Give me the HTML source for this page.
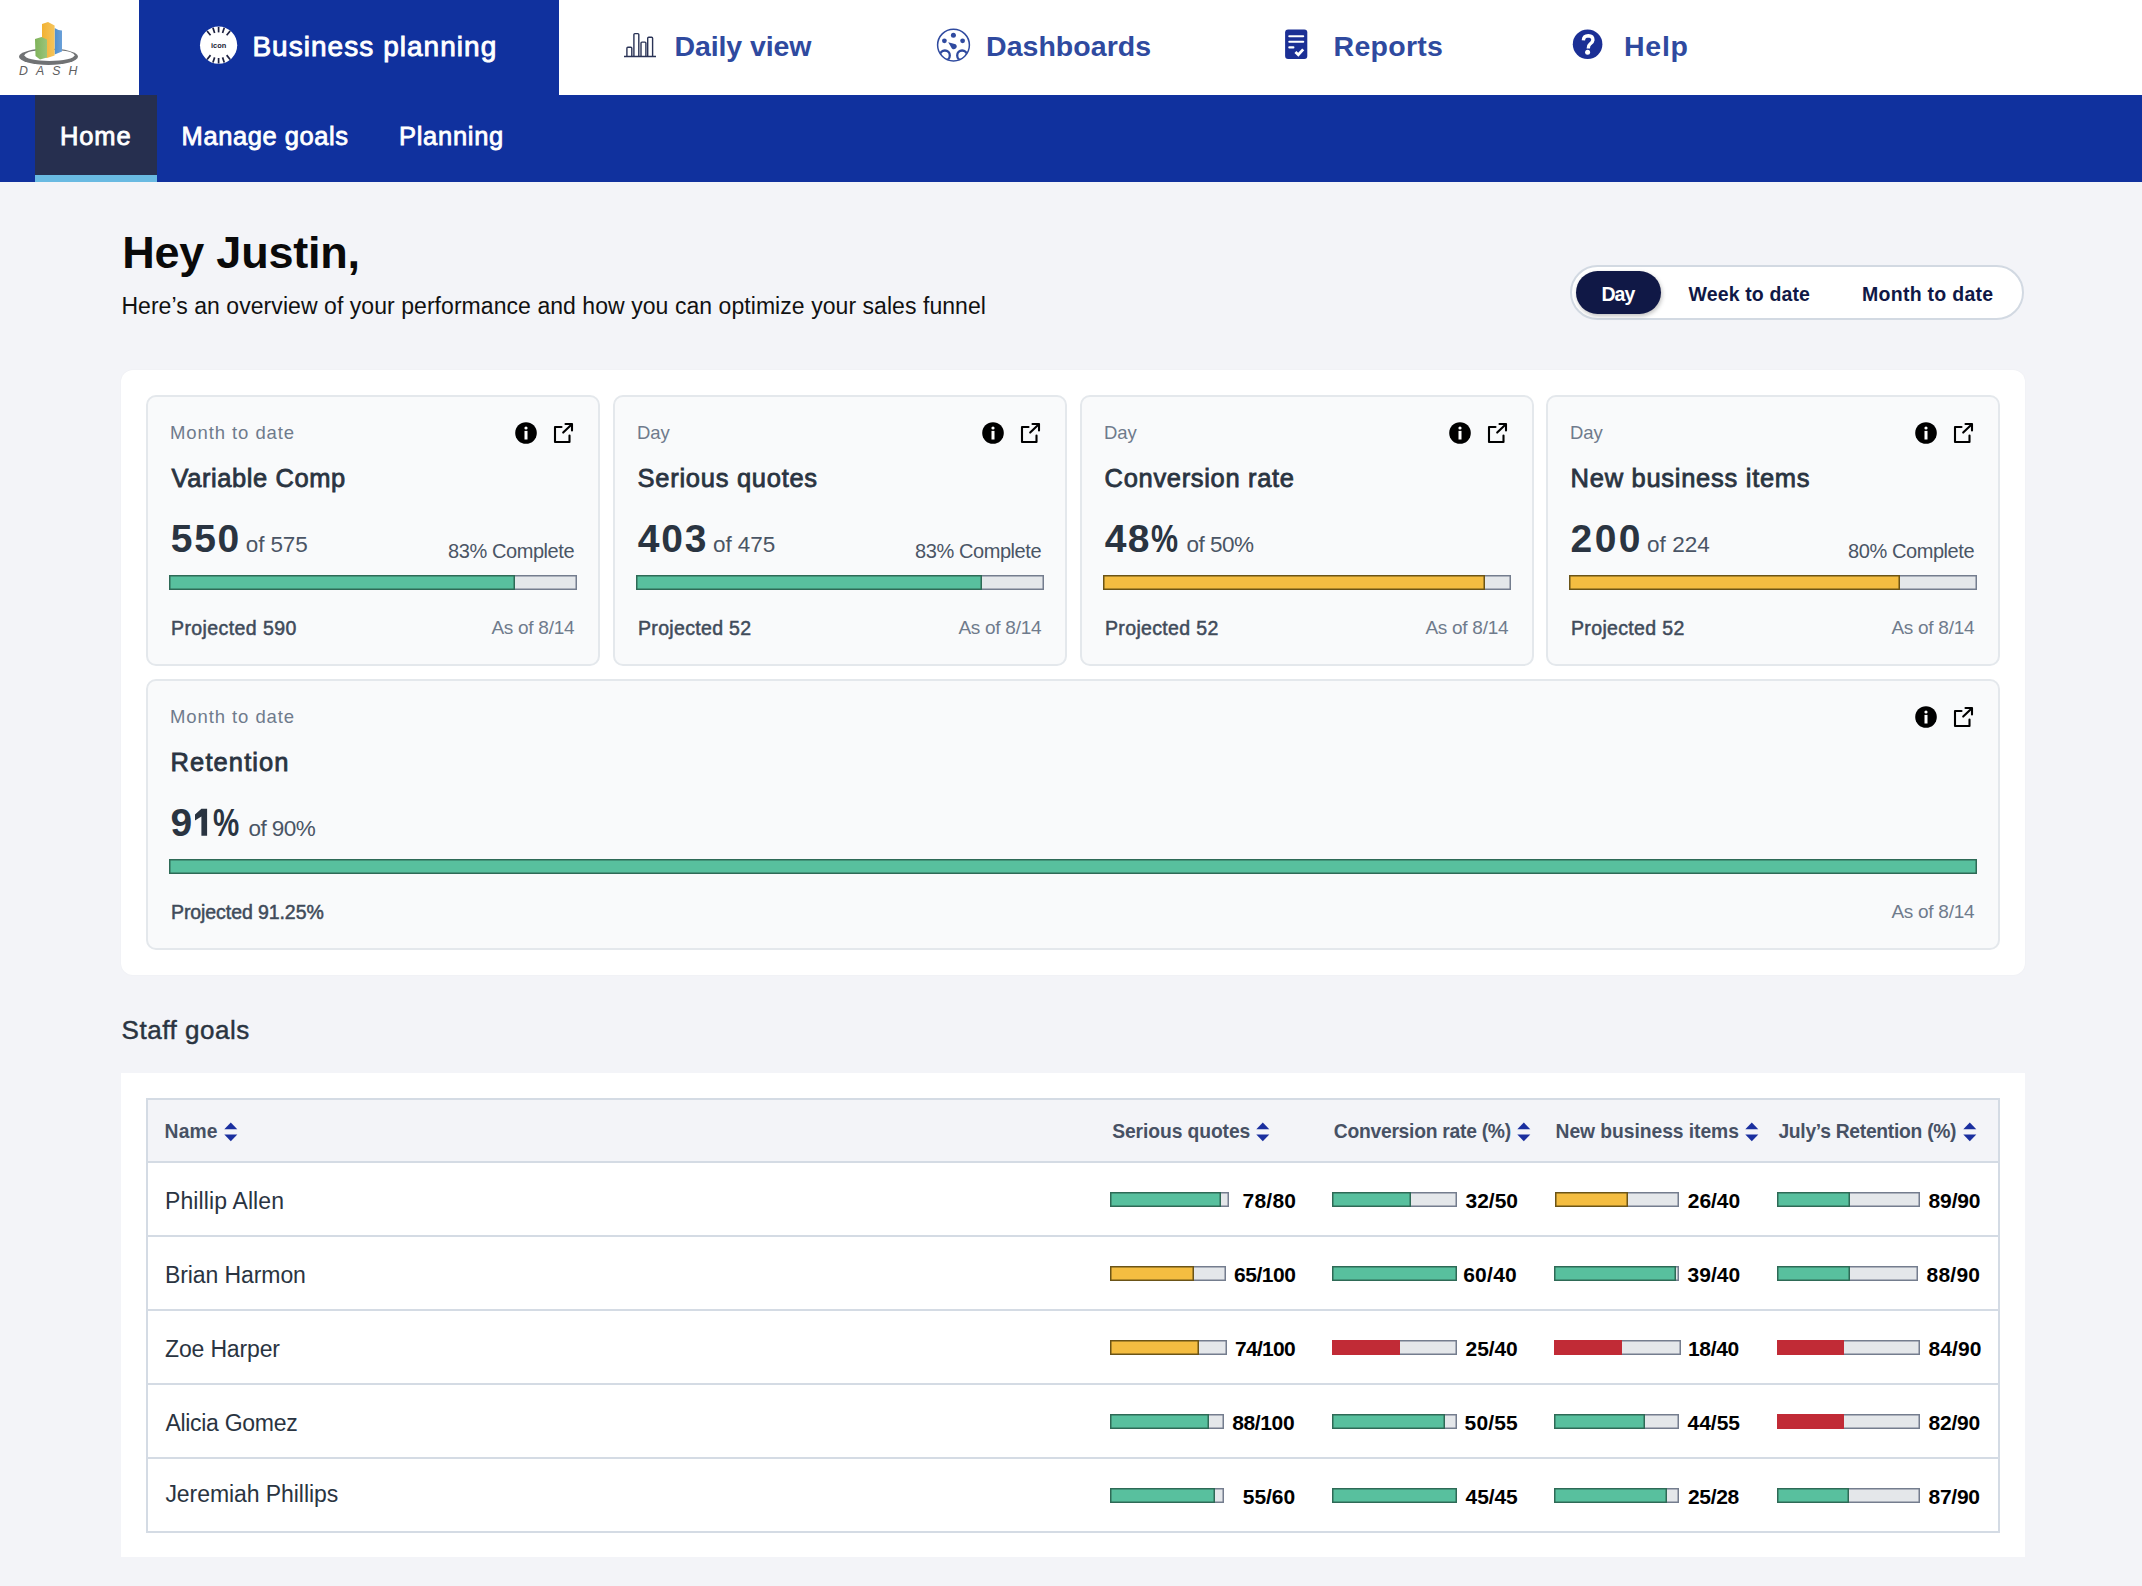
<!DOCTYPE html>
<html><head><meta charset="utf-8"><title>DASH - Business planning</title>
<style>
html,body{margin:0;padding:0;}
body{width:2142px;height:1586px;position:relative;overflow:hidden;background:#f3f4f8;font-family:"Liberation Sans",sans-serif;}
.t{position:absolute;white-space:nowrap;}
.b{position:absolute;}
svg.b{overflow:visible;}
</style></head><body>
<div class="b" style="left:0px;top:0px;width:2142px;height:95px;background:#fff;"></div>
<div class="b" style="left:139px;top:0px;width:420px;height:95px;background:#10319e;"></div>
<div class="b" style="left:0px;top:95px;width:2142px;height:87px;background:#10319e;"></div>
<div class="b" style="left:35px;top:95px;width:122px;height:87px;background:#262f4f;"></div>
<div class="b" style="left:35px;top:175px;width:122px;height:7px;background:#69bae2;"></div>
<svg class="b" style="left:0;top:0" width="139" height="95" viewBox="0 0 139 95">
<defs>
<linearGradient id="gg" x1="0" x2="1"><stop offset="0" stop-color="#7fb35a"/><stop offset="1" stop-color="#9ac47a"/></linearGradient>
<linearGradient id="og" x1="0" x2="1"><stop offset="0" stop-color="#f2b233"/><stop offset="1" stop-color="#f5c45c"/></linearGradient>
<linearGradient id="bg" x1="0" x2="1"><stop offset="0" stop-color="#4f8fd0"/><stop offset="1" stop-color="#6aa0d8"/></linearGradient>
</defs>
<ellipse cx="48.5" cy="56.7" rx="29.5" ry="8.2" fill="#707274"/>
<ellipse cx="49.5" cy="55.3" rx="25" ry="5.6" fill="#fff"/>
<polygon points="54.6,28 58.5,30 62,30.5 62,51.5 54.6,54.5" fill="url(#bg)"/>
<polygon points="42,24 48,22 54.6,25.5 54.6,55.5 47,58 42,56" fill="url(#og)"/>
<polygon points="35,39 41.5,37 47,39.5 47,57.5 40,59.5 35.5,56" fill="url(#gg)"/>
<text x="19" y="75" font-family="Liberation Sans" font-style="italic" font-size="12.3" fill="#606060" letter-spacing="8.1">DASH</text>
</svg>
<svg class="b" style="left:0;top:0" width="260" height="95" viewBox="0 0 260 95">
<circle cx="218.6" cy="45.2" r="18.6" fill="#fff"/><line x1="218.60" y1="32.40" x2="218.60" y2="26.90" stroke="#1d2140" stroke-width="1.7"/><line x1="222.56" y1="33.03" x2="224.26" y2="27.80" stroke="#1d2140" stroke-width="1.7"/><line x1="226.66" y1="35.25" x2="230.12" y2="30.98" stroke="#1d2140" stroke-width="1.7"/><line x1="214.64" y1="33.03" x2="212.94" y2="27.80" stroke="#1d2140" stroke-width="1.7"/><line x1="210.54" y1="35.25" x2="207.08" y2="30.98" stroke="#1d2140" stroke-width="1.7"/><line x1="218.60" y1="58.00" x2="218.60" y2="63.50" stroke="#1d2140" stroke-width="1.7"/><line x1="222.56" y1="57.37" x2="224.26" y2="62.60" stroke="#1d2140" stroke-width="1.7"/><line x1="226.66" y1="55.15" x2="230.12" y2="59.42" stroke="#1d2140" stroke-width="1.7"/><line x1="214.64" y1="57.37" x2="212.94" y2="62.60" stroke="#1d2140" stroke-width="1.7"/><line x1="210.54" y1="55.15" x2="207.08" y2="59.42" stroke="#1d2140" stroke-width="1.7"/>
<text x="218.6" y="48.2" text-anchor="middle" font-family="Liberation Sans" font-weight="700" font-size="7.4" fill="#161a33">icon</text>
</svg>
<div id="t1" class="t" style="left:252.40px;top:30.60px;font-size:28px;line-height:31px;color:#fff;font-weight:400;letter-spacing:1.038px;-webkit-text-stroke:0.9px #fff;">Business planning</div>
<svg class="b" style="left:620px;top:30px" width="40" height="30" viewBox="620 30 40 30">
<g fill="none" stroke="#2a3356" stroke-width="1.4">
<path d="M626.9,56.4 V48.2 q0,-1 1,-1 h2.9 q1,0 1,1 V56.4"/>
<path d="M633.9,56.4 V34.6 q0,-1 1,-1 h2.9 q1,0 1,1 V56.4"/>
<path d="M641,56.4 V43.1 q0,-1 1,-1 h2.9 q1,0 1,1 V56.4"/>
<path d="M647.7,56.4 V38.2 q0,-1 1,-1 h2.9 q1,0 1,1 V56.4"/>
<path d="M624,56.5 H656" stroke-width="1.5"/>
</g></svg>
<div id="t2" class="t" style="left:674.40px;top:30.00px;font-size:28.5px;line-height:32px;color:#2f4a9f;font-weight:700;letter-spacing:-0.089px;">Daily view</div>
<svg class="b" style="left:930px;top:25px" width="50" height="42" viewBox="930 25 50 42">
<defs><clipPath id="dc"><circle cx="953.5" cy="45.1" r="15.5"/></clipPath></defs>
<circle cx="953.5" cy="45.1" r="15.9" fill="none" stroke="#2f4a9f" stroke-width="1.5"/>
<circle cx="953.4" cy="35.3" r="2.5" fill="#2f4a9f"/>
<circle cx="944.4" cy="40.8" r="2.4" fill="#2f4a9f"/>
<circle cx="962.6" cy="40.8" r="2.4" fill="#2f4a9f"/>
<path d="M948.2,42.2 L955.6,44.2 A2.8,2.8 0 1,1 951.9,48.4 Z" fill="#2f4a9f"/>
<g clip-path="url(#dc)" fill="none" stroke="#2f4a9f" stroke-width="2.3">
<circle cx="944.9" cy="55.4" r="4.9"/><circle cx="962.1" cy="55.4" r="4.9"/>
</g></svg>
<div id="t3" class="t" style="left:986.00px;top:30.00px;font-size:28.5px;line-height:32px;color:#2f4a9f;font-weight:700;letter-spacing:0.044px;">Dashboards</div>
<svg class="b" style="left:1280px;top:25px" width="35" height="40" viewBox="1280 25 35 40">
<rect x="1285.1" y="29.6" width="22.2" height="29.3" rx="3" fill="#1b2f95"/>
<g stroke="#fff" stroke-width="2.1" stroke-linecap="round" fill="none">
<path d="M1289.3,36.2 H1303.2"/><path d="M1289.3,41.7 H1303.2"/><path d="M1289.3,47.4 H1293.4"/>
<path d="M1295.4,52.1 L1298.3,54.8 L1303.2,49.4" stroke-width="2.8" stroke-linecap="butt"/>
</g></svg>
<div id="t4" class="t" style="left:1333.60px;top:30.00px;font-size:28.5px;line-height:32px;color:#2f4a9f;font-weight:700;letter-spacing:0.267px;">Reports</div>
<svg class="b" style="left:1565px;top:25px" width="45" height="40" viewBox="1565 25 45 40">
<circle cx="1587.6" cy="44.3" r="14.8" fill="#1b2f95"/>
<path d="M1583.4,40.3 Q1583.6,35.8 1588.3,35.8 Q1593,36 1592.9,40 Q1592.7,42.4 1590,44.1 Q1588.3,45.3 1588.3,48.6" fill="none" stroke="#fff" stroke-width="3.4" stroke-linecap="butt"/>
<circle cx="1587.6" cy="52.3" r="2.5" fill="#fff"/>
</svg>
<div id="t5" class="t" style="left:1624.00px;top:30.00px;font-size:28.5px;line-height:32px;color:#2f4a9f;font-weight:700;letter-spacing:0.733px;">Help</div>
<div id="t6" class="t" style="left:60.00px;top:121.70px;font-size:25.5px;line-height:28px;color:#fff;font-weight:400;letter-spacing:0.867px;-webkit-text-stroke:0.8px #fff;">Home</div>
<div id="t7" class="t" style="left:181.60px;top:121.70px;font-size:25.5px;line-height:28px;color:#fff;font-weight:400;letter-spacing:0.564px;-webkit-text-stroke:0.8px #fff;">Manage goals</div>
<div id="t8" class="t" style="left:399.00px;top:121.70px;font-size:25.5px;line-height:28px;color:#fff;font-weight:400;letter-spacing:0.714px;-webkit-text-stroke:0.8px #fff;">Planning</div>
<div id="t9" class="t" style="left:122.20px;top:227.30px;font-size:45px;line-height:51px;color:#0a0a0a;font-weight:700;letter-spacing:-0.220px;">Hey Justin,</div>
<div id="t10" class="t" style="left:121.40px;top:293.30px;font-size:23px;line-height:26px;color:#111;font-weight:400;letter-spacing:0.057px;">Here’s an overview of your performance and how you can optimize your sales funnel</div>
<div class="b" style="left:1570px;top:265px;width:454px;height:55px;box-sizing:border-box;border:2px solid #d2d9e2;border-radius:28px;background:#fff;"></div>
<div class="b" style="left:1576px;top:271px;width:85px;height:43px;border-radius:22px;background:#101846;box-shadow:1px 2px 4px rgba(0,0,0,0.25);"></div>
<div id="t11" class="t" style="left:1601.40px;top:282.70px;font-size:19.5px;line-height:22px;color:#fff;font-weight:700;letter-spacing:-0.900px;">Day</div>
<div id="t12" class="t" style="left:1688.60px;top:282.70px;font-size:19.5px;line-height:22px;color:#101846;font-weight:700;letter-spacing:0.127px;">Week to date</div>
<div id="t13" class="t" style="left:1862.00px;top:282.70px;font-size:19.5px;line-height:22px;color:#101846;font-weight:700;letter-spacing:0.283px;">Month to date</div>
<div class="b" style="left:121px;top:370px;width:1904px;height:605px;background:#fff;border-radius:12px;box-shadow:0 0 2px rgba(0,0,0,0.04);"></div>
<div class="b" style="left:146px;top:395px;width:454px;height:271px;box-sizing:border-box;background:#f9fafb;border:2px solid #e4e8ec;border-radius:10px;"></div>
<div id="t14" class="t" style="left:170.00px;top:422.40px;font-size:18.5px;line-height:21px;color:#6f7b8c;font-weight:400;letter-spacing:0.917px;">Month to date</div>
<svg class="b" style="left:514px;top:421px" width="24" height="24" viewBox="0 0 24 24">
<circle cx="12" cy="12" r="10.8" fill="#000"/>
<circle cx="12" cy="7" r="1.6" fill="#fff"/>
<rect x="10.5" y="9.9" width="3" height="8.6" fill="#fff"/>
</svg>
<svg class="b" style="left:552px;top:422px" width="24" height="24" viewBox="-2 -4 24 24">
<g fill="none" stroke="#000" stroke-width="2.1" stroke-linecap="round" stroke-linejoin="round">
<path d="M7.5,1 H1 V16 H15.5 V9.5"/>
<path d="M9.2,6.6 L17.6,-1.6"/>
<path d="M11.5,-2 H18 V4.5"/>
</g></svg>
<div id="t15" class="t" style="left:171.60px;top:464.00px;font-size:25.5px;line-height:28px;color:#2a3441;font-weight:400;letter-spacing:0.567px;-webkit-text-stroke:0.8px #2a3441;">Variable Comp</div>
<div id="t16" class="t" style="left:170.80px;top:517.40px;font-size:39px;line-height:43px;color:#2a3441;font-weight:700;letter-spacing:1.700px;">550</div>
<div id="t17" class="t" style="left:245.80px;top:532.00px;font-size:22.5px;line-height:25px;color:#4a5565;font-weight:400;letter-spacing:-0.120px;">of 575</div>
<div id="t18" class="t" style="left:448.00px;top:540.10px;font-size:20px;line-height:22px;color:#4a5565;font-weight:400;letter-spacing:-0.418px;">83% Complete</div>
<div class="b" style="left:169px;top:575px;width:408px;height:15.2px;background:#e4e7ea;box-shadow:inset 0 0 0 1.5px #747d8e;"></div>
<div class="b" style="left:169px;top:575px;width:346.20000000000005px;height:15.2px;background:#58c09e;box-shadow:inset 0 0 0 1.5px #2e6a56;"></div>
<div id="t19" class="t" style="left:171.00px;top:617.00px;font-size:19.5px;line-height:22px;color:#404b5a;font-weight:400;letter-spacing:0.417px;-webkit-text-stroke:0.5px #404b5a;">Projected 590</div>
<div id="t20" class="t" style="left:491.40px;top:617.40px;font-size:19px;line-height:21px;color:#6f7b8c;font-weight:400;letter-spacing:-0.267px;">As of 8/14</div>
<div class="b" style="left:613px;top:395px;width:454px;height:271px;box-sizing:border-box;background:#f9fafb;border:2px solid #e4e8ec;border-radius:10px;"></div>
<div id="t21" class="t" style="left:637.00px;top:422.40px;font-size:18.5px;line-height:21px;color:#6f7b8c;font-weight:400;letter-spacing:-0.100px;">Day</div>
<svg class="b" style="left:981px;top:421px" width="24" height="24" viewBox="0 0 24 24">
<circle cx="12" cy="12" r="10.8" fill="#000"/>
<circle cx="12" cy="7" r="1.6" fill="#fff"/>
<rect x="10.5" y="9.9" width="3" height="8.6" fill="#fff"/>
</svg>
<svg class="b" style="left:1019px;top:422px" width="24" height="24" viewBox="-2 -4 24 24">
<g fill="none" stroke="#000" stroke-width="2.1" stroke-linecap="round" stroke-linejoin="round">
<path d="M7.5,1 H1 V16 H15.5 V9.5"/>
<path d="M9.2,6.6 L17.6,-1.6"/>
<path d="M11.5,-2 H18 V4.5"/>
</g></svg>
<div id="t22" class="t" style="left:637.60px;top:464.00px;font-size:25.5px;line-height:28px;color:#2a3441;font-weight:400;letter-spacing:0.723px;-webkit-text-stroke:0.8px #2a3441;">Serious quotes</div>
<div id="t23" class="t" style="left:637.80px;top:517.40px;font-size:39px;line-height:43px;color:#2a3441;font-weight:700;letter-spacing:1.800px;">403</div>
<div id="t24" class="t" style="left:713.00px;top:532.00px;font-size:22.5px;line-height:25px;color:#4a5565;font-weight:400;letter-spacing:-0.080px;">of 475</div>
<div id="t25" class="t" style="left:915.00px;top:540.10px;font-size:20px;line-height:22px;color:#4a5565;font-weight:400;letter-spacing:-0.418px;">83% Complete</div>
<div class="b" style="left:636px;top:575px;width:408px;height:15.2px;background:#e4e7ea;box-shadow:inset 0 0 0 1.5px #747d8e;"></div>
<div class="b" style="left:636px;top:575px;width:345.79999999999995px;height:15.2px;background:#58c09e;box-shadow:inset 0 0 0 1.5px #2e6a56;"></div>
<div id="t26" class="t" style="left:638.00px;top:617.00px;font-size:19.5px;line-height:22px;color:#404b5a;font-weight:400;letter-spacing:0.327px;-webkit-text-stroke:0.5px #404b5a;">Projected 52</div>
<div id="t27" class="t" style="left:958.40px;top:617.40px;font-size:19px;line-height:21px;color:#6f7b8c;font-weight:400;letter-spacing:-0.267px;">As of 8/14</div>
<div class="b" style="left:1080px;top:395px;width:454px;height:271px;box-sizing:border-box;background:#f9fafb;border:2px solid #e4e8ec;border-radius:10px;"></div>
<div id="t28" class="t" style="left:1104.00px;top:422.40px;font-size:18.5px;line-height:21px;color:#6f7b8c;font-weight:400;letter-spacing:-0.100px;">Day</div>
<svg class="b" style="left:1448px;top:421px" width="24" height="24" viewBox="0 0 24 24">
<circle cx="12" cy="12" r="10.8" fill="#000"/>
<circle cx="12" cy="7" r="1.6" fill="#fff"/>
<rect x="10.5" y="9.9" width="3" height="8.6" fill="#fff"/>
</svg>
<svg class="b" style="left:1486px;top:422px" width="24" height="24" viewBox="-2 -4 24 24">
<g fill="none" stroke="#000" stroke-width="2.1" stroke-linecap="round" stroke-linejoin="round">
<path d="M7.5,1 H1 V16 H15.5 V9.5"/>
<path d="M9.2,6.6 L17.6,-1.6"/>
<path d="M11.5,-2 H18 V4.5"/>
</g></svg>
<div id="t29" class="t" style="left:1104.60px;top:464.00px;font-size:25.5px;line-height:28px;color:#2a3441;font-weight:400;letter-spacing:0.671px;-webkit-text-stroke:0.8px #2a3441;">Conversion rate</div>
<div id="t30" class="t" style="left:1104.80px;top:517.40px;font-size:39px;line-height:43px;color:#2a3441;font-weight:700;letter-spacing:1.200px;">48</div>
<div class="t" style="left:1151.10px;top:517.40px;font-size:39px;line-height:43px;color:#2a3441;font-weight:700;transform:scaleX(0.780);transform-origin:0 0;">%</div>
<div id="t31" class="t" style="left:1186.60px;top:532.00px;font-size:22.5px;line-height:25px;color:#4a5565;font-weight:400;letter-spacing:-0.520px;">of 50%</div>
<div class="b" style="left:1103px;top:575px;width:408px;height:15.2px;background:#e4e7ea;box-shadow:inset 0 0 0 1.5px #747d8e;"></div>
<div class="b" style="left:1103px;top:575px;width:382.20000000000005px;height:15.2px;background:#f4bd41;box-shadow:inset 0 0 0 1.5px #6b5417;"></div>
<div id="t32" class="t" style="left:1105.00px;top:617.00px;font-size:19.5px;line-height:22px;color:#404b5a;font-weight:400;letter-spacing:0.345px;-webkit-text-stroke:0.5px #404b5a;">Projected 52</div>
<div id="t33" class="t" style="left:1425.40px;top:617.40px;font-size:19px;line-height:21px;color:#6f7b8c;font-weight:400;letter-spacing:-0.267px;">As of 8/14</div>
<div class="b" style="left:1546px;top:395px;width:454px;height:271px;box-sizing:border-box;background:#f9fafb;border:2px solid #e4e8ec;border-radius:10px;"></div>
<div id="t34" class="t" style="left:1570.00px;top:422.40px;font-size:18.5px;line-height:21px;color:#6f7b8c;font-weight:400;letter-spacing:-0.100px;">Day</div>
<svg class="b" style="left:1914px;top:421px" width="24" height="24" viewBox="0 0 24 24">
<circle cx="12" cy="12" r="10.8" fill="#000"/>
<circle cx="12" cy="7" r="1.6" fill="#fff"/>
<rect x="10.5" y="9.9" width="3" height="8.6" fill="#fff"/>
</svg>
<svg class="b" style="left:1952px;top:422px" width="24" height="24" viewBox="-2 -4 24 24">
<g fill="none" stroke="#000" stroke-width="2.1" stroke-linecap="round" stroke-linejoin="round">
<path d="M7.5,1 H1 V16 H15.5 V9.5"/>
<path d="M9.2,6.6 L17.6,-1.6"/>
<path d="M11.5,-2 H18 V4.5"/>
</g></svg>
<div id="t35" class="t" style="left:1570.60px;top:464.00px;font-size:25.5px;line-height:28px;color:#2a3441;font-weight:400;letter-spacing:0.718px;-webkit-text-stroke:0.8px #2a3441;">New business items</div>
<div id="t36" class="t" style="left:1570.60px;top:517.40px;font-size:39px;line-height:43px;color:#2a3441;font-weight:700;letter-spacing:2.400px;">200</div>
<div id="t37" class="t" style="left:1647.00px;top:532.00px;font-size:22.5px;line-height:25px;color:#4a5565;font-weight:400;letter-spacing:0.040px;">of 224</div>
<div id="t38" class="t" style="left:1848.00px;top:540.10px;font-size:20px;line-height:22px;color:#4a5565;font-weight:400;letter-spacing:-0.418px;">80% Complete</div>
<div class="b" style="left:1569px;top:575px;width:408px;height:15.2px;background:#e4e7ea;box-shadow:inset 0 0 0 1.5px #747d8e;"></div>
<div class="b" style="left:1569px;top:575px;width:330.70000000000005px;height:15.2px;background:#f4bd41;box-shadow:inset 0 0 0 1.5px #6b5417;"></div>
<div id="t39" class="t" style="left:1571.00px;top:617.00px;font-size:19.5px;line-height:22px;color:#404b5a;font-weight:400;letter-spacing:0.345px;-webkit-text-stroke:0.5px #404b5a;">Projected 52</div>
<div id="t40" class="t" style="left:1891.40px;top:617.40px;font-size:19px;line-height:21px;color:#6f7b8c;font-weight:400;letter-spacing:-0.267px;">As of 8/14</div>
<div class="b" style="left:146px;top:679px;width:1854px;height:271px;box-sizing:border-box;background:#f9fafb;border:2px solid #e4e8ec;border-radius:10px;"></div>
<div id="t41" class="t" style="left:170.00px;top:706.40px;font-size:18.5px;line-height:21px;color:#6f7b8c;font-weight:400;letter-spacing:0.917px;">Month to date</div>
<svg class="b" style="left:1914px;top:705px" width="24" height="24" viewBox="0 0 24 24">
<circle cx="12" cy="12" r="10.8" fill="#000"/>
<circle cx="12" cy="7" r="1.6" fill="#fff"/>
<rect x="10.5" y="9.9" width="3" height="8.6" fill="#fff"/>
</svg>
<svg class="b" style="left:1952px;top:706px" width="24" height="24" viewBox="-2 -4 24 24">
<g fill="none" stroke="#000" stroke-width="2.1" stroke-linecap="round" stroke-linejoin="round">
<path d="M7.5,1 H1 V16 H15.5 V9.5"/>
<path d="M9.2,6.6 L17.6,-1.6"/>
<path d="M11.5,-2 H18 V4.5"/>
</g></svg>
<div id="t42" class="t" style="left:170.60px;top:748.00px;font-size:25.5px;line-height:28px;color:#2a3441;font-weight:400;letter-spacing:1.100px;-webkit-text-stroke:0.8px #2a3441;">Retention</div>
<div id="t43" class="t" style="left:170.60px;top:801.40px;font-size:39px;line-height:43px;color:#2a3441;font-weight:700;">9</div>
<svg class="b" style="left:194.9px;top:805px" width="20" height="34" viewBox="0 0 20 34"><path d="M6.4,3.8 H12.1 V30.7 H6.4 V11.4 L0,15.6 V9.6 Z" fill="#2a3441"/></svg>
<div class="t" style="left:212.50px;top:801.40px;font-size:39px;line-height:43px;color:#2a3441;font-weight:700;transform:scaleX(0.757);transform-origin:0 0;">%</div>
<div id="t44" class="t" style="left:248.40px;top:816.00px;font-size:22.5px;line-height:25px;color:#4a5565;font-weight:400;letter-spacing:-0.520px;">of 90%</div>
<div class="b" style="left:169px;top:859px;width:1808px;height:15.2px;background:#e4e7ea;box-shadow:inset 0 0 0 1.5px #747d8e;"></div>
<div class="b" style="left:169px;top:859px;width:1808px;height:15.2px;background:#58c09e;box-shadow:inset 0 0 0 1.5px #2e6a56;"></div>
<div id="t45" class="t" style="left:171.00px;top:901.00px;font-size:19.5px;line-height:22px;color:#404b5a;font-weight:400;letter-spacing:-0.080px;-webkit-text-stroke:0.5px #404b5a;">Projected 91.25%</div>
<div id="t46" class="t" style="left:1891.40px;top:901.40px;font-size:19px;line-height:21px;color:#6f7b8c;font-weight:400;letter-spacing:-0.267px;">As of 8/14</div>
<div id="t47" class="t" style="left:121.60px;top:1015.30px;font-size:26px;line-height:30px;color:#2a3441;font-weight:400;letter-spacing:0.520px;-webkit-text-stroke:0.45px #2a3441;">Staff goals</div>
<div class="b" style="left:121px;top:1073px;width:1904px;height:484px;background:#fff;"></div>
<div class="b" style="left:146px;top:1098px;width:1854px;height:435px;box-sizing:border-box;border:2px solid #d4dbe4;"></div>
<div class="b" style="left:148px;top:1100px;width:1850px;height:61px;background:#f3f4f8;"></div>
<div class="b" style="left:148px;top:1161px;width:1850px;height:2px;background:#d4dbe4;"></div>
<div class="b" style="left:148px;top:1235px;width:1850px;height:2px;background:#d4dbe4;"></div>
<div class="b" style="left:148px;top:1309px;width:1850px;height:2px;background:#d4dbe4;"></div>
<div class="b" style="left:148px;top:1383px;width:1850px;height:2px;background:#d4dbe4;"></div>
<div class="b" style="left:148px;top:1457px;width:1850px;height:2px;background:#d4dbe4;"></div>
<div id="t48" class="t" style="left:164.60px;top:1120.90px;font-size:19.3px;line-height:21px;color:#475164;font-weight:700;letter-spacing:0.133px;">Name</div>
<svg class="b" style="left:224.2px;top:1121px" width="14" height="22" viewBox="0 0 14 22">
<path d="M0.3,8.2 L6.8,1.6 L13.3,8.2 Z" fill="#1a2f9f"/>
<path d="M0.3,13.6 L6.8,20.2 L13.3,13.6 Z" fill="#1a2f9f"/>
</svg>
<div id="t49" class="t" style="left:1112.20px;top:1120.90px;font-size:19.3px;line-height:21px;color:#475164;font-weight:700;letter-spacing:-0.092px;">Serious quotes</div>
<svg class="b" style="left:1256px;top:1121px" width="14" height="22" viewBox="0 0 14 22">
<path d="M0.3,8.2 L6.8,1.6 L13.3,8.2 Z" fill="#1a2f9f"/>
<path d="M0.3,13.6 L6.8,20.2 L13.3,13.6 Z" fill="#1a2f9f"/>
</svg>
<div id="t50" class="t" style="left:1333.80px;top:1120.90px;font-size:19.3px;line-height:21px;color:#475164;font-weight:700;letter-spacing:-0.267px;">Conversion rate (%)</div>
<svg class="b" style="left:1516.5px;top:1121px" width="14" height="22" viewBox="0 0 14 22">
<path d="M0.3,8.2 L6.8,1.6 L13.3,8.2 Z" fill="#1a2f9f"/>
<path d="M0.3,13.6 L6.8,20.2 L13.3,13.6 Z" fill="#1a2f9f"/>
</svg>
<div id="t51" class="t" style="left:1555.60px;top:1120.90px;font-size:19.3px;line-height:21px;color:#475164;font-weight:700;letter-spacing:-0.059px;">New business items</div>
<svg class="b" style="left:1744.8px;top:1121px" width="14" height="22" viewBox="0 0 14 22">
<path d="M0.3,8.2 L6.8,1.6 L13.3,8.2 Z" fill="#1a2f9f"/>
<path d="M0.3,13.6 L6.8,20.2 L13.3,13.6 Z" fill="#1a2f9f"/>
</svg>
<div id="t52" class="t" style="left:1778.40px;top:1120.90px;font-size:19.3px;line-height:21px;color:#475164;font-weight:700;letter-spacing:-0.284px;">July’s Retention (%)</div>
<svg class="b" style="left:1962.5px;top:1121px" width="14" height="22" viewBox="0 0 14 22">
<path d="M0.3,8.2 L6.8,1.6 L13.3,8.2 Z" fill="#1a2f9f"/>
<path d="M0.3,13.6 L6.8,20.2 L13.3,13.6 Z" fill="#1a2f9f"/>
</svg>
<div id="t53" class="t" style="left:165.00px;top:1187.80px;font-size:23px;line-height:26px;color:#2a3441;font-weight:400;letter-spacing:0.117px;">Phillip Allen</div>
<div class="b" style="left:1110.4px;top:1192px;width:118.5px;height:15px;background:#e4e7ea;box-shadow:inset 0 0 0 1.5px #747d8e;"></div>
<div class="b" style="left:1110.4px;top:1192px;width:110.59999999999991px;height:15px;background:#58c09e;box-shadow:inset 0 0 0 1.5px #2e6a56;"></div>
<div id="t54" class="t" style="left:1242.60px;top:1188.50px;font-size:21px;line-height:23px;color:#000;font-weight:700;letter-spacing:0.200px;">78/80</div>
<div class="b" style="left:1332.2px;top:1192px;width:124.70000000000005px;height:15px;background:#e4e7ea;box-shadow:inset 0 0 0 1.5px #747d8e;"></div>
<div class="b" style="left:1332.2px;top:1192px;width:78.39999999999986px;height:15px;background:#58c09e;box-shadow:inset 0 0 0 1.5px #2e6a56;"></div>
<div id="t55" class="t" style="left:1465.60px;top:1188.50px;font-size:21px;line-height:23px;color:#000;font-weight:700;letter-spacing:-0.050px;">32/50</div>
<div class="b" style="left:1554.5px;top:1192px;width:124.40000000000009px;height:15px;background:#e4e7ea;box-shadow:inset 0 0 0 1.5px #747d8e;"></div>
<div class="b" style="left:1554.5px;top:1192px;width:73.29999999999995px;height:15px;background:#f4bd41;box-shadow:inset 0 0 0 1.5px #6b5417;"></div>
<div id="t56" class="t" style="left:1687.80px;top:1188.50px;font-size:21px;line-height:23px;color:#000;font-weight:700;letter-spacing:-0.050px;">26/40</div>
<div class="b" style="left:1776.7px;top:1192px;width:142.89999999999986px;height:15px;background:#e4e7ea;box-shadow:inset 0 0 0 1.5px #747d8e;"></div>
<div class="b" style="left:1776.7px;top:1192px;width:73.5px;height:15px;background:#58c09e;box-shadow:inset 0 0 0 1.5px #2e6a56;"></div>
<div id="t57" class="t" style="left:1928.60px;top:1188.50px;font-size:21px;line-height:23px;color:#000;font-weight:700;letter-spacing:-0.150px;">89/90</div>
<div id="t58" class="t" style="left:165.00px;top:1262.00px;font-size:23px;line-height:26px;color:#2a3441;font-weight:400;letter-spacing:-0.091px;">Brian Harmon</div>
<div class="b" style="left:1110.4px;top:1266px;width:115.29999999999995px;height:15px;background:#e4e7ea;box-shadow:inset 0 0 0 1.5px #747d8e;"></div>
<div class="b" style="left:1110.4px;top:1266px;width:84.09999999999991px;height:15px;background:#f4bd41;box-shadow:inset 0 0 0 1.5px #6b5417;"></div>
<div id="t59" class="t" style="left:1234.00px;top:1262.50px;font-size:21px;line-height:23px;color:#000;font-weight:700;letter-spacing:-0.480px;">65/100</div>
<div class="b" style="left:1332.2px;top:1266px;width:124.79999999999995px;height:15px;background:#e4e7ea;box-shadow:inset 0 0 0 1.5px #747d8e;"></div>
<div class="b" style="left:1332.2px;top:1266px;width:124.79999999999995px;height:15px;background:#58c09e;box-shadow:inset 0 0 0 1.5px #2e6a56;"></div>
<div id="t60" class="t" style="left:1463.20px;top:1262.50px;font-size:21px;line-height:23px;color:#000;font-weight:700;letter-spacing:0.250px;">60/40</div>
<div class="b" style="left:1554.4px;top:1266px;width:124.59999999999991px;height:15px;background:#e4e7ea;box-shadow:inset 0 0 0 1.5px #747d8e;"></div>
<div class="b" style="left:1554.4px;top:1266px;width:121.89999999999986px;height:15px;background:#58c09e;box-shadow:inset 0 0 0 1.5px #2e6a56;"></div>
<div id="t61" class="t" style="left:1687.60px;top:1262.50px;font-size:21px;line-height:23px;color:#000;font-weight:700;">39/40</div>
<div class="b" style="left:1776.7px;top:1266px;width:141.29999999999995px;height:15px;background:#e4e7ea;box-shadow:inset 0 0 0 1.5px #747d8e;"></div>
<div class="b" style="left:1776.7px;top:1266px;width:73.29999999999995px;height:15px;background:#58c09e;box-shadow:inset 0 0 0 1.5px #2e6a56;"></div>
<div id="t62" class="t" style="left:1926.60px;top:1262.50px;font-size:21px;line-height:23px;color:#000;font-weight:700;letter-spacing:0.200px;">88/90</div>
<div id="t63" class="t" style="left:165.00px;top:1336.10px;font-size:23px;line-height:26px;color:#2a3441;font-weight:400;letter-spacing:-0.156px;">Zoe Harper</div>
<div class="b" style="left:1110.4px;top:1340px;width:116.79999999999995px;height:15px;background:#e4e7ea;box-shadow:inset 0 0 0 1.5px #747d8e;"></div>
<div class="b" style="left:1110.4px;top:1340px;width:88.89999999999986px;height:15px;background:#f4bd41;box-shadow:inset 0 0 0 1.5px #6b5417;"></div>
<div id="t64" class="t" style="left:1235.00px;top:1336.50px;font-size:21px;line-height:23px;color:#000;font-weight:700;letter-spacing:-0.720px;">74/100</div>
<div class="b" style="left:1332.2px;top:1340px;width:124.79999999999995px;height:15px;background:#e4e7ea;box-shadow:inset 0 0 0 1.5px #747d8e;"></div>
<div class="b" style="left:1332.2px;top:1340px;width:67.59999999999991px;height:15px;background:#c12b36;box-shadow:inset 0 0 0 1.5px #c12b36;"></div>
<div id="t65" class="t" style="left:1465.60px;top:1336.50px;font-size:21px;line-height:23px;color:#000;font-weight:700;letter-spacing:-0.100px;">25/40</div>
<div class="b" style="left:1554.4px;top:1340px;width:126.69999999999982px;height:15px;background:#e4e7ea;box-shadow:inset 0 0 0 1.5px #747d8e;"></div>
<div class="b" style="left:1554.4px;top:1340px;width:67.5px;height:15px;background:#c12b36;box-shadow:inset 0 0 0 1.5px #c12b36;"></div>
<div id="t66" class="t" style="left:1688.00px;top:1336.50px;font-size:21px;line-height:23px;color:#000;font-weight:700;letter-spacing:-0.350px;">18/40</div>
<div class="b" style="left:1776.7px;top:1340px;width:142.89999999999986px;height:15px;background:#e4e7ea;box-shadow:inset 0 0 0 1.5px #747d8e;"></div>
<div class="b" style="left:1776.7px;top:1340px;width:67.5px;height:15px;background:#c12b36;box-shadow:inset 0 0 0 1.5px #c12b36;"></div>
<div id="t67" class="t" style="left:1928.60px;top:1336.50px;font-size:21px;line-height:23px;color:#000;font-weight:700;letter-spacing:0.050px;">84/90</div>
<div id="t68" class="t" style="left:165.40px;top:1409.80px;font-size:23px;line-height:26px;color:#2a3441;font-weight:400;letter-spacing:-0.291px;">Alicia Gomez</div>
<div class="b" style="left:1110.4px;top:1414px;width:113.59999999999991px;height:15px;background:#e4e7ea;box-shadow:inset 0 0 0 1.5px #747d8e;"></div>
<div class="b" style="left:1110.4px;top:1414px;width:98.29999999999995px;height:15px;background:#58c09e;box-shadow:inset 0 0 0 1.5px #2e6a56;"></div>
<div id="t69" class="t" style="left:1232.20px;top:1410.50px;font-size:21px;line-height:23px;color:#000;font-weight:700;letter-spacing:-0.360px;">88/100</div>
<div class="b" style="left:1332.2px;top:1414px;width:124.79999999999995px;height:15px;background:#e4e7ea;box-shadow:inset 0 0 0 1.5px #747d8e;"></div>
<div class="b" style="left:1332.2px;top:1414px;width:112.70000000000005px;height:15px;background:#58c09e;box-shadow:inset 0 0 0 1.5px #2e6a56;"></div>
<div id="t70" class="t" style="left:1464.60px;top:1410.50px;font-size:21px;line-height:23px;color:#000;font-weight:700;letter-spacing:0.150px;">50/55</div>
<div class="b" style="left:1554.4px;top:1414px;width:124.59999999999991px;height:15px;background:#e4e7ea;box-shadow:inset 0 0 0 1.5px #747d8e;"></div>
<div class="b" style="left:1554.4px;top:1414px;width:90.29999999999995px;height:15px;background:#58c09e;box-shadow:inset 0 0 0 1.5px #2e6a56;"></div>
<div id="t71" class="t" style="left:1687.60px;top:1410.50px;font-size:21px;line-height:23px;color:#000;font-weight:700;letter-spacing:-0.050px;">44/55</div>
<div class="b" style="left:1776.7px;top:1414px;width:142.89999999999986px;height:15px;background:#e4e7ea;box-shadow:inset 0 0 0 1.5px #747d8e;"></div>
<div class="b" style="left:1776.7px;top:1414px;width:67.5px;height:15px;background:#c12b36;box-shadow:inset 0 0 0 1.5px #c12b36;"></div>
<div id="t72" class="t" style="left:1928.60px;top:1410.50px;font-size:21px;line-height:23px;color:#000;font-weight:700;letter-spacing:-0.250px;">82/90</div>
<div id="t73" class="t" style="left:165.40px;top:1481.20px;font-size:23px;line-height:26px;color:#2a3441;font-weight:400;letter-spacing:-0.062px;">Jeremiah Phillips</div>
<div class="b" style="left:1110.4px;top:1488px;width:113.59999999999991px;height:15px;background:#e4e7ea;box-shadow:inset 0 0 0 1.5px #747d8e;"></div>
<div class="b" style="left:1110.4px;top:1488px;width:104.5px;height:15px;background:#58c09e;box-shadow:inset 0 0 0 1.5px #2e6a56;"></div>
<div id="t74" class="t" style="left:1242.80px;top:1484.50px;font-size:21px;line-height:23px;color:#000;font-weight:700;letter-spacing:-0.050px;">55/60</div>
<div class="b" style="left:1332.2px;top:1488px;width:124.79999999999995px;height:15px;background:#e4e7ea;box-shadow:inset 0 0 0 1.5px #747d8e;"></div>
<div class="b" style="left:1332.2px;top:1488px;width:124.79999999999995px;height:15px;background:#58c09e;box-shadow:inset 0 0 0 1.5px #2e6a56;"></div>
<div id="t75" class="t" style="left:1465.60px;top:1484.50px;font-size:21px;line-height:23px;color:#000;font-weight:700;letter-spacing:-0.100px;">45/45</div>
<div class="b" style="left:1554.4px;top:1488px;width:124.59999999999991px;height:15px;background:#e4e7ea;box-shadow:inset 0 0 0 1.5px #747d8e;"></div>
<div class="b" style="left:1554.4px;top:1488px;width:112.59999999999991px;height:15px;background:#58c09e;box-shadow:inset 0 0 0 1.5px #2e6a56;"></div>
<div id="t76" class="t" style="left:1688.00px;top:1484.50px;font-size:21px;line-height:23px;color:#000;font-weight:700;letter-spacing:-0.350px;">25/28</div>
<div class="b" style="left:1776.7px;top:1488px;width:142.89999999999986px;height:15px;background:#e4e7ea;box-shadow:inset 0 0 0 1.5px #747d8e;"></div>
<div class="b" style="left:1776.7px;top:1488px;width:72.09999999999991px;height:15px;background:#58c09e;box-shadow:inset 0 0 0 1.5px #2e6a56;"></div>
<div id="t77" class="t" style="left:1928.60px;top:1484.50px;font-size:21px;line-height:23px;color:#000;font-weight:700;letter-spacing:-0.300px;">87/90</div>
</body></html>
